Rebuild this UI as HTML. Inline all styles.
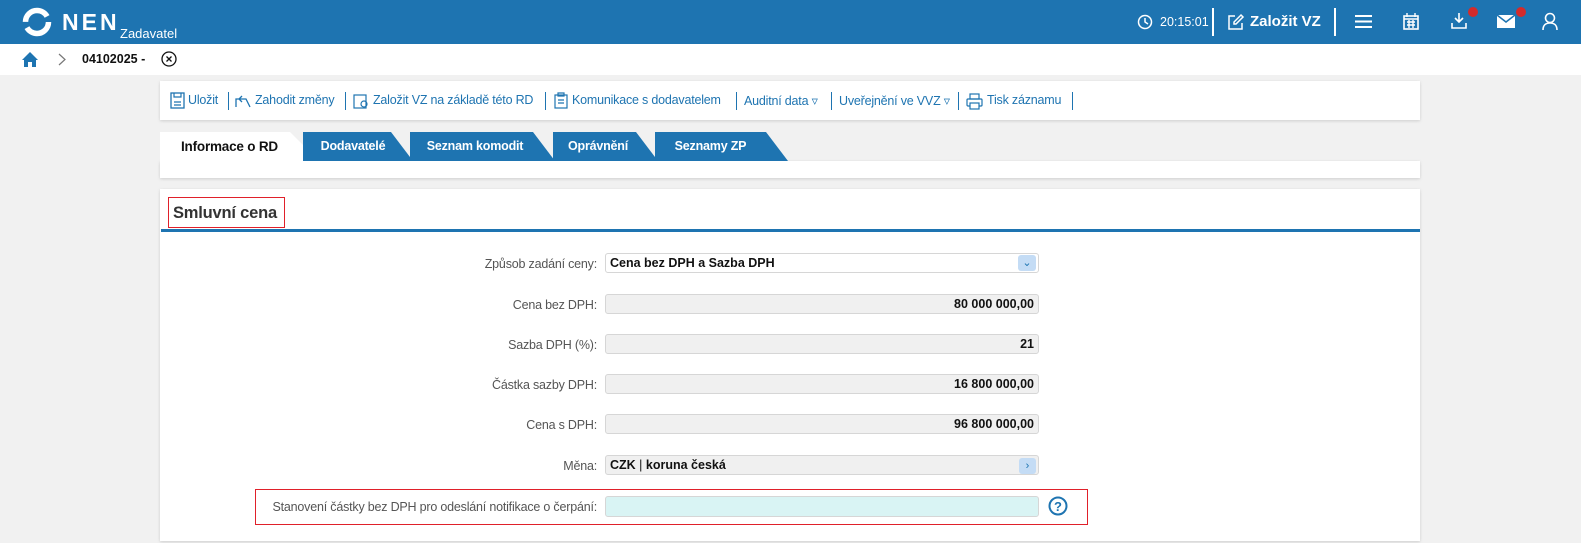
<!DOCTYPE html>
<html><head><meta charset="utf-8"><style>
*{box-sizing:border-box;margin:0;padding:0}
body{width:1581px;height:543px;overflow:hidden;background:#f1f1f1;font-family:"Liberation Sans",Arial,sans-serif;position:relative}
.a{position:absolute}
.hdr{left:0;top:0;width:1581px;height:44px;background:#1e74b1}
.bc{left:0;top:44px;width:1581px;height:31px;background:#fff}
.card{background:#fff;box-shadow:0 1px 3px rgba(0,0,0,.15)}
.tb{font-size:12.5px;color:#1e74b1;top:93px;white-space:nowrap;letter-spacing:-0.2px}
.sep{width:1px;height:18px;background:#1e74b1;top:92px}
.tab{top:132px;height:29px;color:#fff;font-weight:bold;font-size:12.5px;line-height:29px;text-align:center;background:#1e74b1;clip-path:polygon(0 0,calc(100% - 22px) 0,100% 100%,0 100%);letter-spacing:-0.2px}
.lbl{font-size:12.5px;color:#555;text-align:right;width:500px;left:97px;letter-spacing:-0.2px;white-space:nowrap;margin-top:2px}
.inp{left:605px;width:434px;height:20px;border:1px solid #d6d6d6;border-radius:3px;background:#f0f0f0;font-size:12.5px;font-weight:bold;color:#111;line-height:18px;padding:0 4px}
</style></head><body>
<div class="a hdr"></div>
<svg class="a" style="left:22px;top:7px" width="30" height="30" viewBox="0 0 30 30"><circle cx="15" cy="15" r="11.5" fill="none" stroke="#fff" stroke-width="5.5" stroke-dasharray="30 6"/></svg>
<div class="a" style="left:62px;top:9px;color:#fff;font-weight:bold;font-size:23px;letter-spacing:3px">NEN</div>
<div class="a" style="left:120px;top:26px;color:#fff;font-size:13px">Zadavatel</div>
<svg class="a" style="left:1137px;top:14px" width="16" height="16" viewBox="0 0 16 16"><circle cx="8" cy="8" r="6.5" fill="none" stroke="#fff" stroke-width="1.5"/><path d="M8 4v4l3 2" stroke="#fff" stroke-width="1.5" fill="none"/></svg>
<div class="a" style="left:1160px;top:15px;color:#fff;font-size:12.5px">20:15:01</div>
<div class="a" style="left:1212px;top:8px;width:2px;height:28px;background:#fff"></div>
<svg class="a" style="left:1227px;top:13px" width="18" height="18" viewBox="0 0 18 18"><path d="M8 3H2v13h13v-6M14 2l2 2-7 7H7V9z" stroke="#fff" stroke-width="1.5" fill="none"/></svg>
<div class="a" style="left:1250px;top:13px;color:#fff;font-size:15px;font-weight:bold">Založit VZ</div>
<div class="a" style="left:1334px;top:8px;width:2px;height:28px;background:#fff"></div>
<svg class="a" style="left:1355px;top:14px" width="17" height="15"><path d="M0 2h17M0 7.5h17M0 13h17" stroke="#fff" stroke-width="2"/></svg>
<svg class="a" style="left:1403px;top:13px" width="16" height="17"><rect x="1" y="3" width="14" height="13" fill="none" stroke="#fff" stroke-width="1.6"/><path d="M1 6h14M4 0v4M12 0v4M4 9h8M4 12h8M6 7v8M10 7v8" stroke="#fff" stroke-width="1.4"/></svg>
<svg class="a" style="left:1451px;top:12px" width="16" height="18"><path d="M8 1v9M4 6l4 4 4-4M1 11v5h14v-5" stroke="#fff" stroke-width="1.6" fill="none"/></svg>
<div class="a" style="left:1468px;top:7px;width:10px;height:10px;border-radius:50%;background:#d32b2b"></div>
<svg class="a" style="left:1497px;top:15px" width="18" height="13"><rect width="18" height="13" fill="#fff"/><path d="M0 0l9 7 9-7" stroke="#1e74b1" stroke-width="1.5" fill="none"/></svg>
<div class="a" style="left:1516px;top:7px;width:10px;height:10px;border-radius:50%;background:#d32b2b"></div>
<svg class="a" style="left:1542px;top:12px" width="16" height="18"><circle cx="8" cy="6" r="4.5" fill="none" stroke="#fff" stroke-width="1.6"/><path d="M1 18c0-5 3-7 7-7s7 2 7 7" stroke="#fff" stroke-width="1.6" fill="none"/></svg>

<div class="a bc"></div>
<svg class="a" style="left:22px;top:51px" width="16" height="16"><path d="M8 1L0 9h2v7h4v-5h4v5h4V9h2z" fill="#1e74b1"/></svg>
<svg class="a" style="left:58px;top:53px" width="8" height="13"><path d="M1 1l6 5.5L1 12" stroke="#777" stroke-width="1.2" fill="none"/></svg>
<div class="a" style="left:82px;top:52px;font-size:12.5px;font-weight:bold;color:#111">04102025 -</div>
<svg class="a" style="left:161px;top:51px" width="16" height="16"><circle cx="8" cy="8" r="7" fill="none" stroke="#111" stroke-width="1.3"/><path d="M5.5 5.5l5 5M10.5 5.5l-5 5" stroke="#111" stroke-width="1.3"/></svg>

<div class="a card" style="left:160px;top:81px;width:1260px;height:39px"></div>
<svg class="a" style="left:170px;top:92px" width="15" height="17"><rect x="1" y="1" width="13" height="15" fill="none" stroke="#1e74b1" stroke-width="1.3"/><path d="M4 1v4h7V1M4 10h7M4 13h7" stroke="#1e74b1" stroke-width="1.2" fill="none"/></svg>
<div class="a tb" style="left:188px">Uložit</div><div class="a sep" style="left:228px"></div>
<svg class="a" style="left:235px;top:95px" width="17" height="13"><path d="M1 12V4h10l4 8M7 1L4 4l3 3" stroke="#1e74b1" stroke-width="1.3" fill="none"/></svg>
<div class="a tb" style="left:255px">Zahodit změny</div><div class="a sep" style="left:345px"></div>
<svg class="a" style="left:353px;top:92px" width="16" height="17"><rect x="1" y="3" width="12" height="13" fill="none" stroke="#1e74b1" stroke-width="1.2"/><circle cx="11" cy="12" r="3" fill="none" stroke="#1e74b1" stroke-width="1.2"/></svg>
<div class="a tb" style="left:373px">Založit VZ na základě této RD</div><div class="a sep" style="left:545px"></div>
<svg class="a" style="left:554px;top:92px" width="14" height="17"><rect x="1" y="3" width="12" height="13" fill="none" stroke="#1e74b1" stroke-width="1.2"/><path d="M4 1h6v3H4zM4 8h6M4 11h6" stroke="#1e74b1" stroke-width="1.2" fill="none"/></svg>
<div class="a tb" style="left:572px">Komunikace s dodavatelem</div><div class="a sep" style="left:736px"></div>
<div class="a tb" style="left:744px">Auditní data ▿</div><div class="a sep" style="left:831px"></div>
<div class="a tb" style="left:839px">Uveřejnění ve VVZ ▿</div><div class="a sep" style="left:958px"></div>
<svg class="a" style="left:966px;top:93px" width="17" height="17"><rect x="4" y="1" width="9" height="5" fill="none" stroke="#1e74b1" stroke-width="1.2"/><rect x="1" y="6" width="15" height="7" rx="1" fill="none" stroke="#1e74b1" stroke-width="1.2"/><rect x="4" y="10" width="9" height="6" fill="#fff" stroke="#1e74b1" stroke-width="1.2"/></svg>
<div class="a tb" style="left:987px">Tisk záznamu</div><div class="a sep" style="left:1072px"></div>

<div class="a card" style="left:160px;top:161px;width:1260px;height:17px"></div>
<div class="a" style="left:160px;top:132px;width:160px;height:30px;background:#fff;clip-path:polygon(0 0,130px 0,160px 100%,0 100%)"></div>
<div class="a" style="left:181px;top:139px;font-size:13.5px;font-weight:bold;color:#111;letter-spacing:-0.2px">Informace o RD</div>
<div class="a tab" style="left:303px;width:110px;padding-right:10px">Dodavatelé</div>
<div class="a tab" style="left:410px;width:145px;padding-right:15px">Seznam komodit</div>
<div class="a tab" style="left:553px;width:105px;padding-right:15px">Oprávnění</div>
<div class="a tab" style="left:655px;width:133px;padding-right:22px">Seznamy ZP</div>

<div class="a card" style="left:160px;top:189px;width:1260px;height:352px"></div>
<div class="a" style="left:161px;top:229px;width:1259px;height:3px;background:#1e74b1"></div>
<div class="a" style="left:168px;top:197px;width:117px;height:31px;border:1px solid #e0202a"></div>
<div class="a" style="left:173px;top:204px;font-size:16.5px;font-weight:bold;color:#333;letter-spacing:-0.2px">Smluvní cena</div>

<div class="a lbl" style="top:255px">Způsob zadání ceny:</div>
<div class="a inp" style="top:253px;background:#fff">Cena bez DPH a Sazba DPH</div>
<div class="a" style="left:1018px;top:255px;width:18px;height:16px;background:#c4dcf5;border-radius:3px;color:#1e74b1;font-size:11px;text-align:center;line-height:16px">⌄</div>
<div class="a lbl" style="top:296px">Cena bez DPH:</div>
<div class="a inp" style="top:294px;text-align:right">80 000 000,00</div>
<div class="a lbl" style="top:336px">Sazba DPH (%):</div>
<div class="a inp" style="top:334px;text-align:right">21</div>
<div class="a lbl" style="top:376px">Částka sazby DPH:</div>
<div class="a inp" style="top:374px;text-align:right">16 800 000,00</div>
<div class="a lbl" style="top:416px">Cena s DPH:</div>
<div class="a inp" style="top:414px;text-align:right">96 800 000,00</div>
<div class="a lbl" style="top:457px">Měna:</div>
<div class="a inp" style="top:455px">CZK <span style="font-weight:normal">|</span> koruna česká</div>
<div class="a" style="left:1019px;top:458px;width:17px;height:16px;background:#c4dcf5;border-radius:3px;color:#1e74b1;font-size:11px;text-align:center;line-height:16px">›</div>
<div class="a" style="left:255px;top:489px;width:833px;height:36px;border:1px solid #e0202a"></div>
<div class="a lbl" style="top:498px">Stanovení částky bez DPH pro odeslání notifikace o čerpání:</div>
<div class="a inp" style="top:496px;background:#d9f4f4;height:21px"></div>
<svg class="a" style="left:1048px;top:496px" width="20" height="20"><circle cx="10" cy="10" r="8.5" fill="none" stroke="#1e74b1" stroke-width="2"/><text x="10" y="15" font-family="Liberation Sans" font-weight="bold" font-size="13" fill="#1e74b1" text-anchor="middle">?</text></svg>
</body></html>
